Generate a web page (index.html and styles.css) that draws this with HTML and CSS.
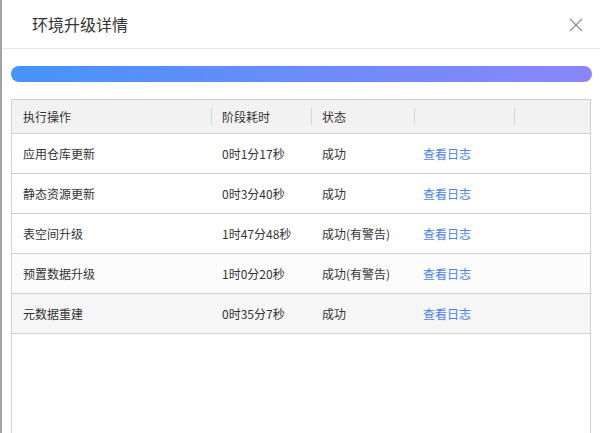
FILE: index.html
```html
<!DOCTYPE html>
<html lang="zh">
<head>
<meta charset="utf-8">
<title>环境升级详情</title>
<link rel="stylesheet" href="styles.css">
</head>
<body>
<div class="page">
  <div class="dialog">
    <div class="dialog-header">
      <span class="dialog-title">环境升级详情</span>
      <button class="close" aria-label="关闭">
        <svg width="14" height="14" viewBox="0 0 14 14"><path d="M1 1L13 13M13 1L1 13" stroke="#8a8a8a" stroke-width="1.1" fill="none"/></svg>
      </button>
    </div>
    <div class="dialog-body">
      <div class="progress"><div class="progress-fill"></div></div>
      <div class="table-wrap">
        <table class="grid">
          <colgroup>
            <col class="c1"><col class="c2"><col class="c3"><col class="c4"><col>
          </colgroup>
          <thead>
            <tr><th>执行操作</th><th>阶段耗时</th><th>状态</th><th></th><th></th></tr>
          </thead>
          <tbody>
            <tr><td>应用仓库更新</td><td>0时1分17秒</td><td>成功</td><td><a class="log">查看日志</a></td><td></td></tr>
            <tr><td>静态资源更新</td><td>0时3分40秒</td><td>成功</td><td><a class="log">查看日志</a></td><td></td></tr>
            <tr><td>表空间升级</td><td>1时47分48秒</td><td>成功(有警告)</td><td><a class="log">查看日志</a></td><td></td></tr>
            <tr class="soft"><td>预置数据升级</td><td>1时0分20秒</td><td>成功(有警告)</td><td><a class="log">查看日志</a></td><td></td></tr>
            <tr class="hover"><td>元数据重建</td><td>0时35分7秒</td><td>成功</td><td><a class="log">查看日志</a></td><td></td></tr>
          </tbody>
        </table>
      </div>
    </div>
  </div>
</div>
</body>
</html>
```

FILE: styles.css
```css
html, body {
  margin: 0;
  padding: 0;
  height: 100%;
  overflow: hidden;
  background: #ffffff;
}
body {
  font-family: "Noto Sans CJK SC", "Noto Sans", sans-serif;
  color: #333333;
}
.page {
  height: 100%;
  border-left: 2px solid #a3a3a3;
  box-sizing: border-box;
}
.dialog {
  background: #ffffff;
  height: 100%;
}
.dialog-header {
  height: 48px;
  border-bottom: 1px solid #e6e6e6;
  display: flex;
  align-items: center;
  justify-content: space-between;
  padding: 0 16px 0 30px;
}
.dialog-title {
  font-size: 16px;
  color: #333333;
  line-height: 20px;
}
.close {
  border: 0;
  background: transparent;
  padding: 0;
  width: 16px;
  height: 16px;
  display: flex;
  align-items: center;
  justify-content: center;
  margin-top: 1px;
}
.dialog-body {
  padding: 17px 8px 0 9px;
}
.progress {
  height: 16px;
  border-radius: 8px;
  overflow: hidden;
  background: #eef0f5;
}
.progress-fill {
  height: 100%;
  width: 100%;
  background: linear-gradient(90deg, #4594f6 0%, #6b8cf9 50%, #8a86fb 100%);
}
.table-wrap {
  margin-top: 17px;
  margin-right: 1px;
  border: 1px solid #d0d0d0;
  border-bottom: 0;
  height: 333px;
}
.grid {
  width: 100%;
  border-collapse: collapse;
  table-layout: fixed;
  font-size: 12px;
}
.c1 { width: 199px; }
.c2 { width: 100px; }
.c3 { width: 103px; }
.c4 { width: 100px; }
.grid th {
  height: 33px;
  background: #f2f2f2;
  font-weight: normal;
  text-align: left;
  padding: 0 0 0 11px;
  color: #333333;
  position: relative;
  border-bottom: 1px solid #d0d0d0;
}
.grid th + th::before {
  content: "";
  position: absolute;
  left: 0;
  top: 8px;
  bottom: 8px;
  width: 1px;
  background: #cfd6df;
}
.grid td {
  height: 39px;
  padding: 0 0 0 11px;
  border-bottom: 1px solid #d0d0d0;
  white-space: nowrap;
  color: #333333;
}
.grid tr.soft td { background: #fcfcfc; }
.grid tr.hover td { background: #f6f6f6; }
.log {
  color: #4a7fe9;
  text-decoration: none;
  cursor: pointer;
  margin-left: -2px;
}
```
